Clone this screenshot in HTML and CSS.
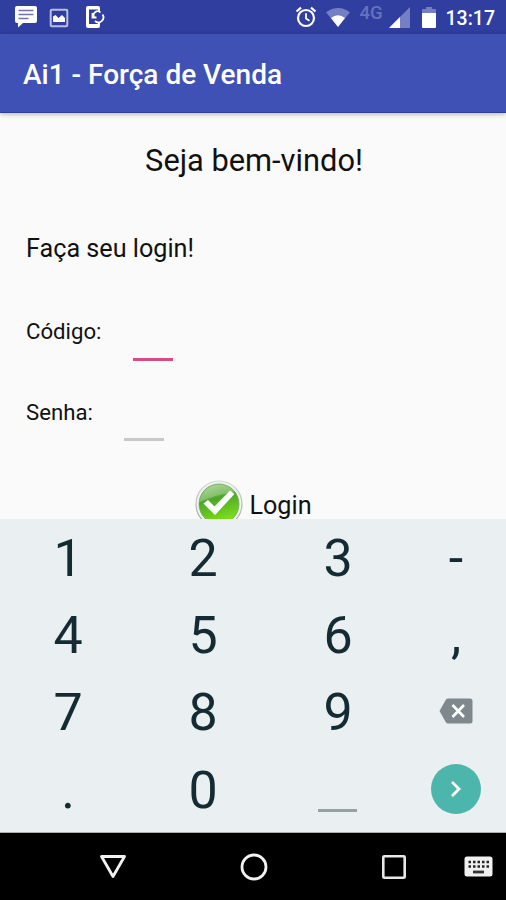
FILE: index.html
```
<!DOCTYPE html>
<html lang="pt-BR">
<head>
    <meta charset="UTF-8">
    <meta name="viewport" content="width=device-width, initial-scale=1.0">
    <title>Ai1 - Força de Venda</title>
    <link rel="stylesheet" href="styles.css">
</head>
<body>
    <div class="status-bar">
        <svg class="icon-message" width="24" height="24" viewBox="0 0 24 24">
            <path d="M3 1h18a2 2 0 0 1 2 2v13a2 2 0 0 1-2 2H9l-5 4.500V18H3a2 2 0 0 1-2-2V3a2 2 0 0 1 2-2z" fill="#fff"/>
            <path d="M4.500 5.500h15M4.500 9.500h15M4.500 13.500h10" stroke="#6f76ab" stroke-width="1.500"/>
        </svg>
        <svg class="icon-picture" width="20" height="20" viewBox="0 0 20 20">
            <rect x="1.700" y="1.700" width="16.600" height="16.600" rx="1" fill="none" stroke="#b7bfe8" stroke-width="2"/>
            <path d="M4 14V8.500l2.500-1.500 3 3 3.500-3 3 3v4z" fill="#fff"/>
        </svg>
        <svg class="icon-phone" width="20" height="24" viewBox="0 0 20 24">
            <path d="M15 7V3a2 2 0 0 0-2-2H3a2 2 0 0 0-2 2v18a2 2 0 0 0 2 2h10a2 2 0 0 0 2-2v-4h-2v2H4V4.500h9V7z" fill="#fff"/>
            <path d="M7.500 8v4.500h4M9 12a4 4 0 0 1 6.500-4.500M17.500 9.500a5 5 0 0 1-7.500 6.500" fill="none" stroke="#fff" stroke-width="1.800"/>
        </svg>
        <svg class="icon-alarm" width="22" height="22" viewBox="0 0 22 22">
            <circle cx="11" cy="12" r="8" fill="none" stroke="#fff" stroke-width="2.200"/>
            <path d="M1.500 5.500L6 1.700M20.500 5.500L16 1.700" stroke="#fff" stroke-width="2.200"/>
            <path d="M11 7.200V12.500l3.500 2.200" fill="none" stroke="#fff" stroke-width="1.800"/>
        </svg>
        <svg class="icon-wifi" width="24" height="20" viewBox="0 0 24 20">
            <path d="M12 19L0 4.300Q12-4.300 24 4.300z" fill="#7580c4"/>
            <path d="M12 19L5 10Q12 4.500 19 10z" fill="#fff"/>
        </svg>
        <span class="network">4G</span>
        <svg class="icon-signal" width="21" height="21" viewBox="0 0 21 21">
            <path d="M21 0v21H0z" fill="#7580c4"/>
            <path d="M11 10v11H0z" fill="#fff"/>
        </svg>
        <svg class="icon-battery" width="14" height="21" viewBox="0 0 14 21">
            <path d="M4 0h6v2h3a1 1 0 0 1 1 1v4H0V3a1 1 0 0 1 1-1h3z" fill="#7580c4"/>
            <path d="M0 6h14v14a1 1 0 0 1-1 1H1a1 1 0 0 1-1-1z" fill="#fff"/>
        </svg>
        <span class="clock">13:17</span>
    </div>

    <header class="app-bar">
        <h1>Ai1 - Força de Venda</h1>
    </header>

    <main class="login">
        <h2>Seja bem-vindo!</h2>
        <p class="hint">Faça seu login!</p>
        <div class="field">
            <label>Código:</label>
            <span class="input active"></span>
        </div>
        <div class="field">
            <label>Senha:</label>
            <span class="input"></span>
        </div>
        <div class="submit">
            <svg width="50" height="50" viewBox="0 0 50 50">
                <defs>
                    <linearGradient id="ring" x1="0" y1="0" x2="0" y2="1">
                        <stop offset="0" stop-color="#d5dad5"/>
                        <stop offset="1" stop-color="#9ba39b"/>
                    </linearGradient>
                    <linearGradient id="green" x1="0" y1="0" x2="0.300" y2="1">
                        <stop offset="0" stop-color="#9fd08a"/>
                        <stop offset="0.450" stop-color="#4fa52c"/>
                        <stop offset="1" stop-color="#7be016"/>
                    </linearGradient>
                </defs>
                <circle cx="25" cy="25" r="23" fill="#f1f3f1" stroke="url(#ring)" stroke-width="1.200"/>
                <circle cx="25" cy="25" r="20" fill="url(#green)" stroke="#6fa85c" stroke-width="0.800"/>
                <path d="M5.500 23A20 20 0 0 1 41 13Q24 15 5.500 23z" fill="#fff" opacity="0.250"/>
                <path d="M9.500 24.500l4.500-3.500 6.500 6.500L36 11.500l4.500 3.500L21 36z" fill="#fff"/>
            </svg>
            <span>Login</span>
        </div>
    </main>

    <div class="keyboard">
        <span class="key">1</span>
        <span class="key">2</span>
        <span class="key">3</span>
        <span class="key">-</span>
        <span class="key">4</span>
        <span class="key">5</span>
        <span class="key">6</span>
        <span class="key">,</span>
        <span class="key">7</span>
        <span class="key">8</span>
        <span class="key">9</span>
        <span class="key icon">
            <svg width="34" height="26" viewBox="0 0 34 26">
                <path d="M9 0.500h22a2.500 2.500 0 0 1 2.500 2.500v20a2.500 2.500 0 0 1-2.500 2.500H9a2.500 2.500 0 0 1-2-1L0.500 13 7 1.500a2.500 2.500 0 0 1 2-1z" fill="#7f898d"/>
                <path d="M13.500 7l11.500 12M25 7L13.500 19" stroke="#fff" stroke-width="2.600"/>
            </svg>
        </span>
        <span class="key">.</span>
        <span class="key">0</span>
        <span class="key icon"><span class="space"></span></span>
        <span class="key icon">
            <span class="next">
                <svg width="12" height="18" viewBox="0 0 12 18">
                    <path d="M2 2l7 7-7 7" fill="none" stroke="#fff" stroke-width="2.800"/>
                </svg>
            </span>
        </span>
    </div>

    <nav class="nav-bar">
        <svg class="nav-back" width="28" height="26" viewBox="0 0 28 26">
            <path d="M2.500 2.500h23L14 22.500z" fill="none" stroke="#f2f2f2" stroke-width="2.800" stroke-linejoin="round"/>
        </svg>
        <svg class="nav-home" width="28" height="28" viewBox="0 0 28 28">
            <circle cx="14" cy="14" r="12" fill="none" stroke="#f2f2f2" stroke-width="2.800"/>
        </svg>
        <svg class="nav-recent" width="26" height="26" viewBox="0 0 26 26">
            <rect x="2.300" y="2.300" width="21.400" height="21.400" rx="1" fill="none" stroke="#e8e8e8" stroke-width="2.600"/>
        </svg>
        <svg class="nav-keyboard" width="29" height="21" viewBox="0 0 29 21">
            <rect x="0.500" y="0.500" width="28" height="20" rx="2.500" fill="#f0f0f0"/>
            <path d="M4.500 6h20.500M4.500 10.500h20.500" stroke="#222" stroke-width="2.500" stroke-dasharray="2.500 2"/>
            <path d="M9 16h11" stroke="#333" stroke-width="2.800"/>
        </svg>
    </nav>
</body>
</html>
```
FILE: styles.css
```
* { box-sizing: border-box; }
body { font-family: Roboto, 'Noto Sans', sans-serif; margin: 0; height: 900px; display: flex; flex-direction: column; overflow: hidden; color: #111; background: #fafafa; }
svg { display: block; flex: none; }
h1, h2, p { margin: 0; font-weight: 400; }

.status-bar { height: 34px; flex: none; display: flex; align-items: flex-start; padding: 5px 11px 0 14px; background: #303f9f; color: white; }
.icon-picture { margin: 3px 0 0 11px; }
.icon-phone { margin-left: 16px; }
.icon-alarm { margin: 1px 0 0 auto; }
.icon-wifi { margin: 3px 0 0 9px; }
.network { margin: -3px 0 0 10px; font-size: 18.5px; line-height: 22px; font-weight: 500; color: #6672bc; width: 24px; }
.icon-signal { margin: 2px 0 0 5px; }
.icon-battery { margin: 2px 0 0 12px; }
.clock { margin-left: 10px; font-size: 19.5px; line-height: 27px; font-weight: 500; }

.app-bar { height: 79px; flex: none; display: flex; align-items: center; padding: 2px 23px 0; background: #3f51b5; border-bottom: 1px solid #2b409a; color: white; box-shadow: 0 1px 5px rgba(0,0,0,0.3); z-index: 1; }
.app-bar h1 { font-size: 28px; font-weight: 500; }

.login { height: 406px; flex: none; overflow: hidden; padding: 27px 26px 0; }
.login h2 { padding-left: 2px; font-size: 30.8px; line-height: 42px; text-align: center; }
.hint { margin-top: 49px; font-size: 25.2px; line-height: 36px; }
.field { display: flex; align-items: flex-start; font-size: 22.2px; line-height: 30px; height: 81px; }
.hint + .field { margin-top: 49px; }
.input { width: 40px; height: 44px; margin-left: 31px; border-bottom: 3px solid #c6c8c9; }
.input.active { height: 45px; border-color: #dc4a82; }
.submit { display: flex; justify-content: center; gap: 5px; padding: 1px 0 0; font-size: 25.2px; line-height: 53px; }

.keyboard { height: 314px; flex: none; display: grid; grid-template-columns: 135px 135px 135px 1fr; grid-auto-rows: 77.3px; background: #eaeff1; color: #142b33; border-bottom: 1px solid #a9adae; }
.key { display: flex; align-items: center; justify-content: center; padding: 2px 0 0 1px; font-size: 52px; line-height: 74px; }
.key.icon { padding: 0 0 2px; }
.space { width: 39px; height: 3px; margin-top: 43px; background: #98a0a2; }
.next { width: 50px; height: 50px; display: flex; align-items: center; justify-content: center; border-radius: 50%; background: #4db6ac; }

.nav-bar { flex: 1; display: flex; align-items: center; padding: 0 13px 0 99px; background: black; }
.nav-home { margin-left: 113px; }
.nav-recent { margin-left: 113px; }
.nav-keyboard { margin-left: auto; }
```
